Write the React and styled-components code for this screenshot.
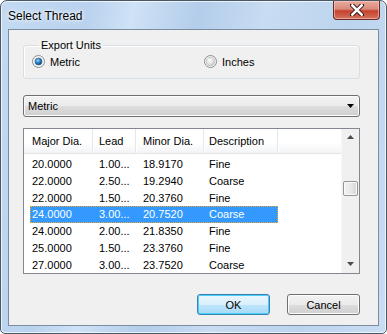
import React from "react";
import styled, { createGlobalStyle } from "styled-components";

const rows = [
  ["20.0000", "1.00...", "18.9170", "Fine"],
  ["22.0000", "2.50...", "19.2940", "Coarse"],
  ["22.0000", "1.50...", "20.3760", "Fine"],
  ["24.0000", "3.00...", "20.7520", "Coarse"],
  ["24.0000", "2.00...", "21.8350", "Fine"],
  ["25.0000", "1.50...", "23.3760", "Fine"],
  ["27.0000", "3.00...", "23.7520", "Coarse"],
];

const cols = [
  { title: "Major Dia.", width: 69, pad: 8 },
  { title: "Lead", width: 43, pad: 6 },
  { title: "Minor Dia.", width: 68, pad: 7 },
  { title: "Description", width: 74, pad: 5 },
];

const Global = createGlobalStyle`
  html, body { margin: 0; padding: 0; background: #ffffff; }
  body { font-family: "Liberation Sans", Arial, sans-serif; font-size: 11px; color: #000; }
`;

const Window = styled.div`
  width: 387px;
  height: 334px;
  box-sizing: border-box;
  display: flex;
  flex-direction: column;
  padding: 0 7px 7px 7px;
  border: 1px solid #4a5866;
  border-radius: 7px 7px 5px 5px;
  background: linear-gradient(100deg, #c3daf2 0%, #b9d2ee 20%, #cfe2f6 30%, #b3cdea 45%, #c8dcf2 60%, #bcd4ee 80%, #c9ddf3 100%);
  box-shadow: inset 0 0 0 1px rgba(255, 255, 255, 0.7);
`;

const TitleBar = styled.div`
  height: 28px;
  display: flex;
  align-items: flex-start;
  justify-content: space-between;
`;

const Title = styled.div`
  font-family: "Liberation Sans", Arial, sans-serif;
  font-size: 12px;
  color: #000;
  padding-top: 8px;
  text-shadow: 0 0 6px #ffffff, 0 0 3px #ffffff;
`;

const CloseButton = styled.div`
  width: 45px;
  height: 18px;
  margin-right: -1px;
  border: 1px solid #6b2b25;
  border-top: none;
  border-radius: 0 0 4px 4px;
  background: linear-gradient(#e9a99c 0%, #d98a7c 45%, #c4412c 55%, #d5735f 100%);
  box-shadow: inset 0 0 0 1px rgba(255, 220, 210, 0.5);
  display: flex;
  align-items: center;
  justify-content: center;
`;

const Client = styled.div`
  flex: 1;
  background: #f0f0f0;
  border: 1px solid #7b8da0;
  display: flex;
  flex-direction: column;
  padding: 0 18px 0 14px;
`;

const Group = styled.fieldset`
  margin: 9px 0 0 0;
  padding: 4px 0 0 8px;
  height: 40px;
  box-sizing: border-box;
  border: 1px solid #d5dfe5;
  border-radius: 3px;
  box-shadow: inset 1px 1px 0 #ffffff;
  display: flex;
  align-items: flex-start;
`;

const Legend = styled.legend`
  padding: 0 2px;
  margin-left: 7px;
  font-size: 11px;
  line-height: 12px;
`;

const Radio = styled.label`
  display: flex;
  align-items: center;
  gap: 5px;
  width: ${({ $w }) => $w}px;
  font-size: 11px;
`;

const Combo = styled.div`
  margin-top: 16px;
  height: 22px;
  box-sizing: border-box;
  border: 1px solid #707070;
  border-radius: 3px;
  background: linear-gradient(#f2f2f2 0%, #ebebeb 50%, #dddddd 51%, #cfcfcf 100%);
  box-shadow: inset 0 0 0 1px #fcfcfc;
  display: flex;
  align-items: center;
  justify-content: space-between;
  padding: 0 5px 0 4px;
`;

const List = styled.div`
  margin-top: 11px;
  height: 146px;
  box-sizing: border-box;
  border: 1px solid #828790;
  background: #ffffff;
  display: flex;
`;

const ListBody = styled.div`
  flex: 1;
  display: flex;
  flex-direction: column;
  overflow: hidden;
`;

const Header = styled.div`
  height: 24px;
  display: flex;
  background: linear-gradient(#ffffff 0%, #ffffff 55%, #f3f4f6 100%);
  border-bottom: 1px solid #e5e5e5;
  margin-bottom: 2px;
`;

const HeadCell = styled.div`
  width: ${({ $w }) => $w}px;
  box-sizing: border-box;
  padding-left: ${({ $pad }) => $pad}px;
  display: flex;
  align-items: center;
  border-right: 1px solid #e3e8ee;
  box-shadow: 1px 0 0 #ffffff;
`;

const Row = styled.div`
  height: 17px;
  display: flex;
  margin-left: 6px;
  width: 248px;
  box-sizing: border-box;
  background: ${({ $sel }) => ($sel ? "#3399ff" : "transparent")};
  color: ${({ $sel }) => ($sel ? "#ffffff" : "#000000")};
  outline: ${({ $sel }) => ($sel ? "1px dotted #f5a623" : "none")};
  outline-offset: -1px;
`;

const Cell = styled.div`
  width: ${({ $w }) => $w}px;
  box-sizing: border-box;
  padding-left: ${({ $pad }) => $pad}px;
  display: flex;
  align-items: center;
  white-space: nowrap;
`;

const Scrollbar = styled.div`
  width: 17px;
  background: #f0f0f0;
  border-left: 1px solid #f7f7f7;
  display: flex;
  flex-direction: column;
  align-items: center;
`;

const ScrollArrow = styled.div`
  height: 17px;
  display: flex;
  align-items: center;
  justify-content: center;
`;

const Thumb = styled.div`
  margin-top: 35px;
  width: 15px;
  height: 15px;
  box-sizing: border-box;
  border: 1px solid #959595;
  border-radius: 2px;
  background: linear-gradient(90deg, #f3f3f3 0%, #e8e8e8 50%, #d6d6d6 100%);
  box-shadow: inset 0 0 0 1px #fafafa;
`;

const Spacer = styled.div`
  flex: 1;
`;

const Buttons = styled.div`
  margin-top: 20px;
  display: flex;
  justify-content: flex-end;
  gap: 17px;
`;

const Button = styled.div`
  width: 73px;
  height: 21px;
  box-sizing: border-box;
  border: 1px solid ${({ $def }) => ($def ? "#3c7fb1" : "#707070")};
  border-radius: 3px;
  background: ${({ $def }) =>
    $def
      ? "linear-gradient(#eaf6fd 0%, #d9f0fc 50%, #bee6fd 51%, #a7d9f5 100%)"
      : "linear-gradient(#f2f2f2 0%, #ebebeb 50%, #dddddd 51%, #cfcfcf 100%)"};
  box-shadow: inset 0 0 0 1px ${({ $def }) => ($def ? "#48d0f8" : "#fcfcfc")};
  display: flex;
  align-items: center;
  justify-content: center;
  font-size: 11px;
`;

const RadioDot = ({ on }) => (
  <svg width="13" height="13" viewBox="0 0 13 13">
    <defs>
      <radialGradient id={on ? "ron" : "roff"} cx="0.4" cy="0.35" r="0.7">
        <stop offset="0" stopColor={on ? "#8fd3ff" : "#ffffff"} />
        <stop offset="0.6" stopColor={on ? "#1f6fb8" : "#e0e0e0"} />
        <stop offset="1" stopColor={on ? "#0a3e73" : "#c8c8c8"} />
      </radialGradient>
    </defs>
    <circle cx="6.5" cy="6.5" r="6" fill="#f4f4f4" stroke="#8e8f8f" />
    <circle cx="6.5" cy="6.5" r={on ? 3.5 : 4.2} fill={`url(#${on ? "ron" : "roff"})`} stroke={on ? "#2b5f8f" : "#b0b0b0"} strokeWidth="0.6" />
  </svg>
);

const Triangle = ({ dir = "down", size = 7, color = "#000" }) => (
  <svg width={size} height={size / 2 + 1} viewBox="0 0 8 5">
    <path d={dir === "down" ? "M0 0 L8 0 L4 4.5 Z" : "M0 4.5 L8 4.5 L4 0 Z"} fill={color} />
  </svg>
);

export default function App() {
  return (
    <>
      <Global />
      <Window>
        <TitleBar>
          <Title>Select Thread</Title>
          <CloseButton>
            <svg width="14" height="12" viewBox="0 0 14 12">
              <path d="M2 1 L12 11 M12 1 L2 11" stroke="#3a1a16" strokeWidth="4.4" strokeLinecap="round" />
              <path d="M2.3 1.3 L11.7 10.7 M11.7 1.3 L2.3 10.7" stroke="#ffffff" strokeWidth="2.6" strokeLinecap="round" />
            </svg>
          </CloseButton>
        </TitleBar>
        <Client>
          <Group>
            <Legend>Export Units</Legend>
            <Radio $w={172}>
              <RadioDot on />
              Metric
            </Radio>
            <Radio $w={80}>
              <RadioDot />
              Inches
            </Radio>
          </Group>
          <Combo>
            <span>Metric</span>
            <Triangle />
          </Combo>
          <List>
            <ListBody>
              <Header>
                {cols.map((c, i) => (
                  <HeadCell key={i} $w={c.width} $pad={c.pad}>
                    {c.title}
                  </HeadCell>
                ))}
              </Header>
              {rows.map((r, i) => (
                <Row key={i} $sel={i === 3}>
                  {r.map((v, j) => (
                    <Cell
                      key={j}
                      $w={j === 0 ? cols[j].width - 6 : cols[j].width}
                      $pad={j === 0 ? 2 : cols[j].pad}
                    >
                      {v}
                    </Cell>
                  ))}
                </Row>
              ))}
            </ListBody>
            <Scrollbar>
              <ScrollArrow>
                <Triangle dir="up" color="#4d4d4d" />
              </ScrollArrow>
              <Thumb />
              <Spacer />
              <ScrollArrow>
                <Triangle color="#4d4d4d" />
              </ScrollArrow>
            </Scrollbar>
          </List>
          <Buttons>
            <Button $def>OK</Button>
            <Button>Cancel</Button>
          </Buttons>
        </Client>
      </Window>
    </>
  );
}
